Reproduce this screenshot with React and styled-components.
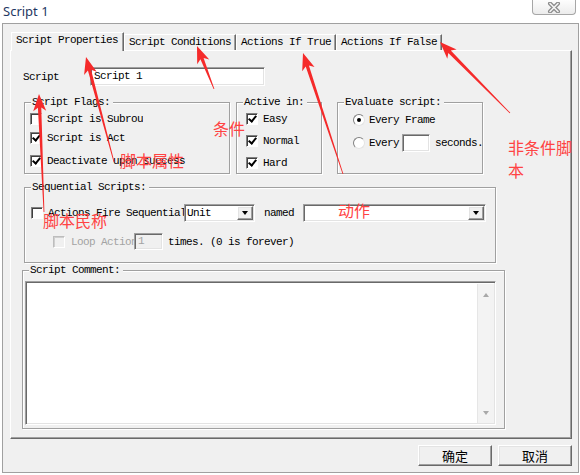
import React from 'react';
import styled, { createGlobalStyle } from 'styled-components';

const MONO = `"Liberation Mono", "DejaVu Sans Mono", monospace`;
const CJK = `"Noto Sans CJK SC", "Noto Sans", sans-serif`;

const GlobalStyle = createGlobalStyle`
  html, body {
    margin: 0;
    padding: 0;
    background: #fff;
  }
`;

// red arrows drawn over the dialog: [tail, tip]
const arrows = [
  [[114, 162], [86, 57]],
  [[214, 89], [197, 46]],
  [[343, 174], [303, 53]],
  [[510, 113], [440, 42]],
  [[44, 212], [39, 94]],
];

function arrowPoints([x1, y1], [x2, y2]) {
  const head = 17;
  const headW = 13;
  const neck = 3.4;
  const dx = x2 - x1;
  const dy = y2 - y1;
  const len = Math.hypot(dx, dy);
  const ux = dx / len;
  const uy = dy / len;
  const px = -uy;
  const py = ux;
  const bx = x2 - ux * head;
  const by = y2 - uy * head;
  const nx = x2 - ux * head * 0.8;
  const ny = y2 - uy * head * 0.8;
  const pts = [
    [x1 + px * 0.4, y1 + py * 0.4],
    [nx + px * neck / 2, ny + py * neck / 2],
    [bx + px * headW / 2, by + py * headW / 2],
    [x2, y2],
    [bx - px * headW / 2, by - py * headW / 2],
    [nx - px * neck / 2, ny - py * neck / 2],
    [x1 - px * 0.4, y1 - py * 0.4],
  ];
  return pts.map((p) => p.map((v) => v.toFixed(1)).join(',')).join(' ');
}

export default function App() {
  return (
    <Page>
      <GlobalStyle />
      <TitleBar>
        <Title>Script 1</Title>
        <CloseButton>
          <svg width="14" height="11" viewBox="0 0 14 11">
            <path d="M3 1.5 L11 9.5 M11 1.5 L3 9.5" stroke="#8a8a8a" strokeWidth="4" strokeLinecap="round" />
            <path d="M3 1.5 L11 9.5 M11 1.5 L3 9.5" stroke="#f4f4f4" strokeWidth="1.6" strokeLinecap="round" />
          </svg>
        </CloseButton>
      </TitleBar>

      <Dialog>
        <TabStrip>
          <Tab $active>Script Properties</Tab>
          <Tab>Script Conditions</Tab>
          <Tab>Actions If True</Tab>
          <Tab>Actions If False</Tab>
        </TabStrip>

        <Panel>
          <Row $h={19} $mt={16} $ml={-1}>
            <Text $w={67}>Script</Text>
            <TextBox $w={175} $h={19}>Script 1</TextBox>
          </Row>

          <GroupRow>
            <GroupBox $w={206} $h={72}>
              <Legend>Script Flags:</Legend>
              <Row $mt={3} $pl={5}>
                <CheckBox />
                <Text $ml={5} $w={96}>Script is Subroutine</Text>
              </Row>
              <Row $mt={5} $pl={5}>
                <CheckBox $checked />
                <Text $ml={5} $w={78}>Script is Active</Text>
              </Row>
              <Row $mt={9} $pl={5}>
                <CheckBox $checked />
                <Text $ml={5}>Deactivate upon success</Text>
              </Row>
            </GroupBox>

            <GroupBox $w={86} $h={72} $ml={6}>
              <Legend>Active in:</Legend>
              <Row $mt={3} $pl={9}>
                <CheckBox $checked />
                <Text $ml={5}>Easy</Text>
              </Row>
              <Row $mt={8} $pl={9}>
                <CheckBox $checked />
                <Text $ml={5}>Normal</Text>
              </Row>
              <Row $mt={8} $pl={9}>
                <CheckBox $checked />
                <Text $ml={5}>Hard</Text>
              </Row>
            </GroupBox>

            <GroupBox $w={146} $h={72} $ml={15}>
              <Legend>Evaluate script:</Legend>
              <Row $mt={4} $pl={15}>
                <Radio $on />
                <Text $ml={4}>Every Frame</Text>
              </Row>
              <Row $mt={7} $h={18} $pl={15}>
                <Radio />
                <Text $ml={4}>Every</Text>
                <TextBox $w={28} $h={18} $ml={3} />
                <Text $ml={5}>seconds.</Text>
              </Row>
            </GroupBox>
          </GroupRow>

          <GroupBox $w={472} $h={76} $mt={13}>
            <Legend>Sequential Scripts:</Legend>
            <Row $mt={10} $h={18} $pl={6}>
              <CheckBox />
              <Text $ml={5} $w={136}>Actions Fire Sequentially</Text>
              <Combo $w={71}>
                <span>Unit</span>
                <DropButton />
              </Combo>
              <Text $ml={9}>named</Text>
              <Combo $w={183} $ml={9}>
                <span />
                <DropButton />
              </Combo>
            </Row>
            <Row $mt={11} $h={17} $pl={28}>
              <CheckBox $disabled />
              <Text $ml={6} $w={63} $disabled>Loop Actions</Text>
              <TextBox $w={29} $h={17} $disabled>1</TextBox>
              <Text $ml={5}>times. (0 is forever)</Text>
            </Row>
          </GroupBox>

          <GroupBox $w={483} $h={159} $mt={7} $ml={-2}>
            <Legend>Script Comment:</Legend>
            <Memo>
              <MemoBody />
              <ScrollTrack>
                <Tri $up />
                <Tri />
              </ScrollTrack>
            </Memo>
          </GroupBox>
        </Panel>

        <Footer>
          <Button>确定</Button>
          <Button>取消</Button>
        </Footer>
      </Dialog>

      <Overlay width="580" height="475" viewBox="0 0 580 475">
        {arrows.map(([tail, tip], i) => (
          <polygon key={i} points={arrowPoints(tail, tip)} fill="#f52a2a" />
        ))}
      </Overlay>

      <Note $x={120} $y={152}>脚本属性</Note>
      <Note $x={213} $y={120}>条件</Note>
      <Note $x={508} $y={136} $w={68} $lh={23}>非条件脚本</Note>
      <Note $x={43} $y={212}>脚本民称</Note>
      <Note $x={338} $y={202}>动作</Note>
    </Page>
  );
}

const Page = styled.div`
  position: relative;
  width: 580px;
  height: 475px;
  overflow: hidden;
  background: #fff;
  font-family: ${MONO};
  font-size: 11px;
  letter-spacing: -0.6px;
  color: #000;
`;

const TitleBar = styled.div`
  display: flex;
  justify-content: space-between;
  align-items: flex-start;
  height: 23px;
`;

const Title = styled.div`
  padding: 2px 0 0 3px;
  font-family: "Noto Sans", ${CJK};
  font-size: 13px;
  line-height: 18px;
  letter-spacing: 0;
  color: #1f3763;
`;

const CloseButton = styled.div`
  box-sizing: border-box;
  width: 44px;
  height: 15px;
  margin-right: 4px;
  border: 1px solid #a6a6a6;
  border-top: none;
  border-radius: 0 0 4px 4px;
  background: linear-gradient(#fdfdfd, #ececec);
  display: flex;
  align-items: center;
  justify-content: center;
`;

const Dialog = styled.div`
  box-sizing: border-box;
  width: 577px;
  height: 450px;
  margin-left: 2px;
  padding: 8px 6px 0 7px;
  border: 1px solid #a0a0a0;
  background: #f0f0f0;
  display: flex;
  flex-direction: column;
`;

const TabStrip = styled.div`
  display: flex;
  align-items: flex-end;
  height: 18px;
  margin-left: 1px;
`;

const Tab = styled.div`
  position: relative;
  box-sizing: border-box;
  flex: none;
  height: ${(p) => (p.$active ? 19 : 16)}px;
  margin-bottom: ${(p) => (p.$active ? -1 : 0)}px;
  padding: ${(p) => (p.$active ? '1px 5px 0 4px' : '0 4px')};
  z-index: ${(p) => (p.$active ? 1 : 0)};
  background: #f0f0f0;
  border-left: 1px solid #fff;
  border-top: 1px solid #fff;
  border-right: 1px solid #696969;
  box-shadow: inset -1px 0 0 #a0a0a0;
  line-height: ${(p) => (p.$active ? 12 : 14)}px;
  white-space: nowrap;
`;

const Panel = styled.div`
  box-sizing: border-box;
  width: 562px;
  height: 389px;
  padding-left: 13px;
  border: 1px solid;
  border-color: #fff #696969 #696969 #fff;
  box-shadow: inset -1px -1px 0 #a0a0a0;
  display: flex;
  flex-direction: column;
  align-items: flex-start;
`;

const Row = styled.div`
  display: flex;
  align-items: center;
  height: ${(p) => p.$h || 14}px;
  margin-top: ${(p) => p.$mt || 0}px;
  margin-left: ${(p) => p.$ml || 0}px;
  padding-left: ${(p) => p.$pl || 0}px;
  white-space: nowrap;
`;

const Text = styled.span`
  flex: none;
  margin-left: ${(p) => p.$ml || 0}px;
  line-height: 14px;
  color: ${(p) => (p.$disabled ? '#a3a3a3' : '#000')};
  ${(p) => p.$w && `width: ${p.$w}px; overflow: hidden;`}
`;

const GroupRow = styled.div`
  display: flex;
  margin-top: 16px;
`;

const GroupBox = styled.div`
  box-sizing: border-box;
  flex: none;
  width: ${(p) => p.$w}px;
  height: ${(p) => p.$h}px;
  margin-top: ${(p) => p.$mt || 0}px;
  margin-left: ${(p) => p.$ml || 0}px;
  border: 1px solid #a0a0a0;
  box-shadow: inset 1px 1px 0 #fff, 1px 1px 0 #fff;
  display: flex;
  flex-direction: column;
`;

const Legend = styled.div`
  align-self: flex-start;
  height: 13px;
  margin: -7px 0 0 6px;
  padding: 0 3px 0 1px;
  line-height: 13px;
  background: #f0f0f0;
`;

const sunken = `
  border: 1px solid;
  border-color: #a0a0a0 #fff #fff #a0a0a0;
  box-shadow: inset 1px 1px 0 #696969, inset -1px -1px 0 #e3e3e3;
`;

const raised = `
  border: 1px solid;
  border-color: #fff #696969 #696969 #fff;
  box-shadow: inset -1px -1px 0 #a0a0a0, inset 1px 1px 0 #e3e3e3;
`;

const TextBox = styled.div`
  box-sizing: border-box;
  flex: none;
  width: ${(p) => p.$w}px;
  height: ${(p) => p.$h}px;
  margin-left: ${(p) => p.$ml || 0}px;
  padding-left: 3px;
  ${sunken}
  background: ${(p) => (p.$disabled ? '#f0f0f0' : '#fff')};
  color: ${(p) => (p.$disabled ? '#a3a3a3' : '#000')};
  line-height: ${(p) => p.$h - 2}px;
`;

const CheckBox = styled.span`
  box-sizing: border-box;
  flex: none;
  width: 12px;
  height: 12px;
  border: 1px solid;
  border-color: ${(p) => (p.$disabled ? '#bdbdbd #fff #fff #bdbdbd' : '#808080 #fff #fff #808080')};
  box-shadow: inset 1px 1px 0 ${(p) => (p.$disabled ? '#cfcfcf' : '#404040')};
  background: ${(p) => (p.$disabled ? '#f0f0f0' : '#fff')};
  position: relative;

  &::after {
    content: '';
    display: ${(p) => (p.$checked ? 'block' : 'none')};
    position: absolute;
    left: 3px;
    top: 0px;
    width: 3px;
    height: 6px;
    border: solid #000;
    border-width: 0 2px 2px 0;
    transform: rotate(40deg);
  }
`;

const Radio = styled.span`
  box-sizing: border-box;
  flex: none;
  width: 12px;
  height: 12px;
  border-radius: 50%;
  border: 1px solid;
  border-color: #808080 #e3e3e3 #e3e3e3 #808080;
  background: #fff;
  display: flex;
  align-items: center;
  justify-content: center;

  &::after {
    content: '';
    width: 4px;
    height: 4px;
    border-radius: 50%;
    background: ${(p) => (p.$on ? '#000' : 'transparent')};
  }
`;

const Combo = styled.div`
  box-sizing: border-box;
  flex: none;
  width: ${(p) => p.$w}px;
  height: 18px;
  margin-left: ${(p) => p.$ml || 0}px;
  padding: 1px 1px 1px 2px;
  ${sunken}
  background: #fff;
  display: flex;
  align-items: center;
  justify-content: space-between;
  line-height: 14px;
`;

const DropButton = styled.span`
  box-sizing: border-box;
  width: 16px;
  height: 14px;
  ${raised}
  background: #f0f0f0;
  display: flex;
  align-items: center;
  justify-content: center;

  &::after {
    content: '';
    width: 0;
    height: 0;
    border-left: 3.5px solid transparent;
    border-right: 3.5px solid transparent;
    border-top: 4px solid #000;
  }
`;

const Memo = styled.div`
  box-sizing: border-box;
  width: 471px;
  height: 144px;
  margin: 4px 0 0 2px;
  padding: 2px 1px 1px 2px;
  ${sunken}
  background: #fff;
  display: flex;
`;

const MemoBody = styled.div`
  flex: 1;
`;

const ScrollTrack = styled.div`
  width: 16px;
  background: #f3f3f3;
  border-left: 1px solid #e6e6e6;
  display: flex;
  flex-direction: column;
  align-items: center;
  justify-content: space-between;
  padding: 9px 0 8px;
`;

const Tri = styled.span`
  width: 0;
  height: 0;
  border-left: 3.5px solid transparent;
  border-right: 3.5px solid transparent;
  ${(p) => (p.$up ? 'border-bottom' : 'border-top')}: 4px solid #a8a8a8;
`;

const Footer = styled.div`
  display: flex;
  justify-content: flex-end;
  gap: 6px;
  margin-top: 6px;
`;

const Button = styled.button`
  box-sizing: border-box;
  width: 74px;
  height: 21px;
  padding: 0;
  ${raised}
  background: #f0f0f0;
  font-family: ${CJK};
  font-size: 13px;
  letter-spacing: 0;
  color: #000;
  line-height: 17px;
`;

const Overlay = styled.svg`
  position: absolute;
  left: 0;
  top: 0;
  z-index: 2;
  pointer-events: none;
`;

const Note = styled.div`
  position: absolute;
  left: ${(p) => p.$x}px;
  top: ${(p) => p.$y}px;
  z-index: 3;
  ${(p) => (p.$w ? `width: ${p.$w}px;` : 'white-space: nowrap;')}
  font-family: ${CJK};
  font-size: 16px;
  line-height: ${(p) => p.$lh || 16}px;
  letter-spacing: 0;
  color: #ff4343;
`;
